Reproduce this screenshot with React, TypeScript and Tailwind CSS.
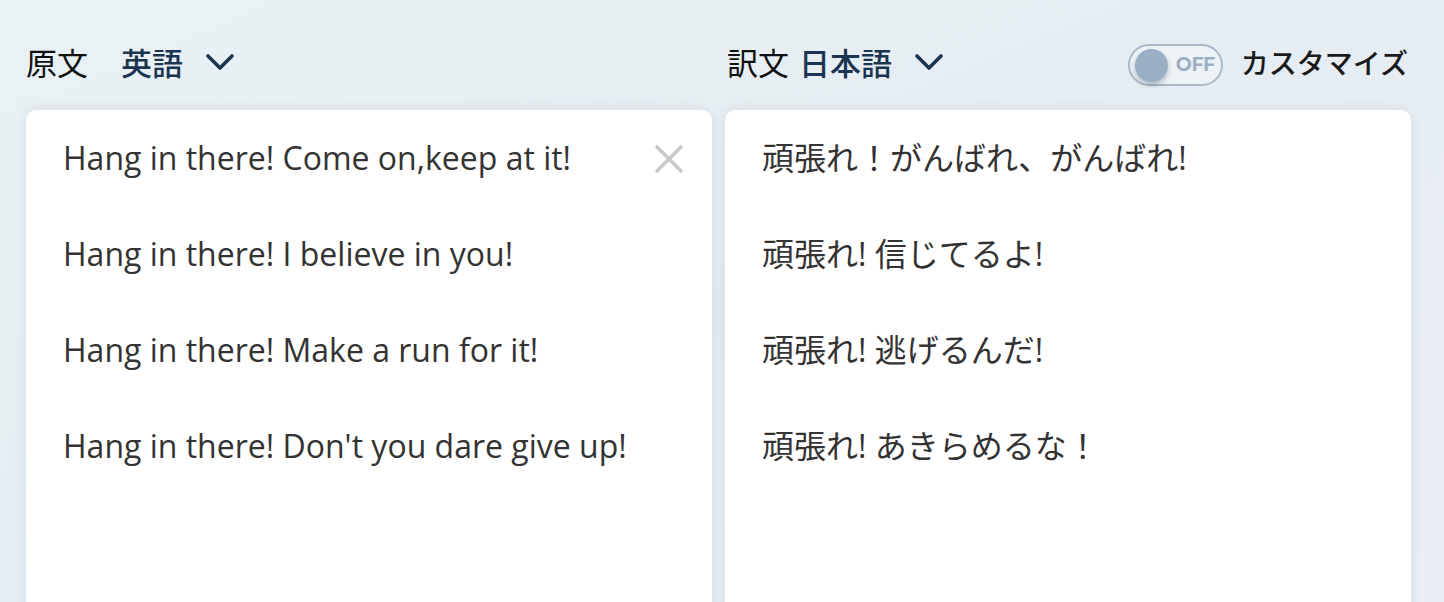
import React from "react";

const sans = "font-['Open_Sans','Noto_Sans_CJK_JP',sans-serif]";
const jp = "font-['Noto_Sans_CJK_JP',sans-serif]";

function Chevron() {
  return (
    <svg width="30" height="20" viewBox="0 0 30 20" className="shrink-0">
      <polyline
        points="3,4 15,16 27,4"
        fill="none"
        stroke="#1b3550"
        strokeWidth="3.6"
        strokeLinecap="round"
        strokeLinejoin="round"
      />
    </svg>
  );
}

function CloseIcon() {
  return (
    <svg width="30" height="30" viewBox="0 0 30 30">
      <path
        d="M3 3 L27 27 M27 3 L3 27"
        stroke="#c9c9c9"
        strokeWidth="3.6"
        strokeLinecap="round"
      />
    </svg>
  );
}

function Toggle() {
  return (
    <div className="mt-[6px] flex h-[42px] w-[95px] items-center rounded-full border-2 border-[#a8b9ca] bg-[#edf2f6] pl-[5px]">
      <div className="h-[33px] w-[33px] rounded-full bg-[#9aafc4] shadow-[0_3px_5px_rgba(60,80,100,0.35)]" />
      <span className="ml-[8px] font-['Montserrat','Lato',sans-serif] text-[19px] font-bold tracking-tight text-[#9db0c3]">
        OFF
      </span>
    </div>
  );
}

const source = [
  "Hang in there! Come on,keep at it!",
  "Hang in there! I believe in you!",
  "Hang in there! Make a run for it!",
  "Hang in there! Don't you dare give up!",
];

const target = [
  "頑張れ！がんばれ、がんばれ!",
  "頑張れ! 信じてるよ!",
  "頑張れ! 逃げるんだ!",
  "頑張れ! あきらめるな！",
];

export default function App() {
  return (
    <div className="h-[602px] overflow-hidden bg-gradient-to-br from-[#eaf1f5] via-[#e6edf2] to-[#e9eff4] pl-[26px] pr-[33px] pt-[38px]">
      <div className="grid grid-cols-2 gap-x-[13px]">
        <div className={`flex h-[48px] items-center ${jp} text-[31px]`}>
          <span className="font-normal text-[#111]">原文</span>
          <span className="ml-[33px] font-medium text-[#1b3550]">英語</span>
          <span className="ml-[22px]">
            <Chevron />
          </span>
        </div>
        <div className={`flex h-[48px] items-center pl-[2px] ${jp} text-[31px]`}>
          <span className="font-normal text-[#111]">訳文</span>
          <span className="ml-[10px] font-medium text-[#1b3550]">日本語</span>
          <span className="ml-[22px]">
            <Chevron />
          </span>
          <div className="ml-auto flex items-center gap-[18px] pr-[3px]">
            <Toggle />
            <span className="text-[28px] font-medium text-[#1a1a1a]">カスタマイズ</span>
          </div>
        </div>

        <div className="relative mt-[24px] h-[520px] rounded-[10px] bg-white pl-[37px] pt-[24px] shadow-[0_0_12px_rgba(150,170,190,0.25)]">
          <div className="absolute right-[28px] top-[34px]">
            <CloseIcon />
          </div>
          <div className={`flex flex-col gap-[48px] ${sans} text-[32px] leading-[48px] text-[#333]`}>
            {source.map((s) => (
              <p key={s}>{s}</p>
            ))}
          </div>
        </div>
        <div className="mt-[24px] h-[520px] rounded-[10px] bg-white pl-[37px] pt-[24px] shadow-[0_0_12px_rgba(150,170,190,0.25)]">
          <div className={`flex flex-col gap-[48px] ${sans} text-[32px] leading-[48px] text-[#333]`}>
            {target.map((s) => (
              <p key={s}>{s}</p>
            ))}
          </div>
        </div>
      </div>
    </div>
  );
}
